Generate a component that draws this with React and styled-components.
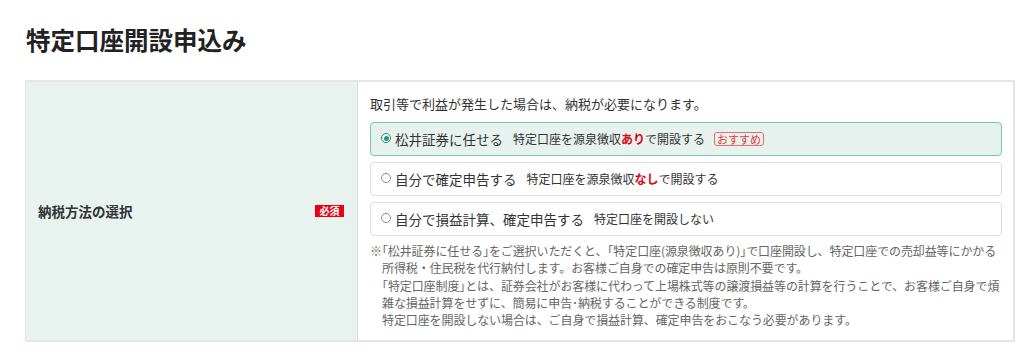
import React from "react";
import styled, { createGlobalStyle } from "styled-components";

const GlobalStyle = createGlobalStyle`
  html, body {
    margin: 0;
    padding: 0;
    background: #ffffff;
  }
  body {
    font-family: "Noto Sans CJK JP", "Noto Sans", sans-serif;
    color: #333333;
  }
`;

const Page = styled.div`
  padding: 26px 10px 0 26px;
`;

const Title = styled.h1`
  margin: 0 0 26px 0;
  font-size: 24.5px;
  line-height: 28px;
  font-weight: 700;
  color: #222222;
`;

const Table = styled.div`
  display: grid;
  grid-template-columns: 332px 1fr;
  width: 990px;
  margin-left: -1px;
  box-sizing: border-box;
  border: 2px solid #e5e5e5;
  border-left-width: 1px;
`;

const HeadCell = styled.div`
  display: flex;
  align-items: center;
  justify-content: space-between;
  padding: 0 13px 0 12px;
  background: #e8f2ef;
  border-right: 1px solid #dcdcdc;
`;

const Label = styled.span`
  font-size: 13.5px;
  font-weight: 700;
  color: #333333;
`;

const Required = styled.span`
  display: inline-block;
  height: 12px;
  line-height: 12px;
  padding: 0 4.5px;
  background: #e60012;
  color: #ffffff;
  font-size: 10px;
  font-weight: 700;
`;

const BodyCell = styled.div`
  padding: 12px 11px 12px 12px;
  display: flex;
  flex-direction: column;
  min-width: 0;
`;

const Intro = styled.p`
  margin: 0 0 8px 0;
  font-size: 13px;
  line-height: 20px;
  color: #333333;
`;

const Options = styled.div`
  display: flex;
  flex-direction: column;
  gap: 6px;
`;

const Option = styled.label`
  display: flex;
  align-items: center;
  box-sizing: border-box;
  height: 34px;
  padding: 0 10px;
  border: 1px solid ${(p) => (p.$selected ? "#79c4ad" : "#dddddd")};
  border-radius: 4px;
  background: ${(p) => (p.$selected ? "#e7f2ee" : "#ffffff")};
  cursor: pointer;
`;

const Radio = styled.span`
  flex: none;
  position: relative;
  box-sizing: border-box;
  width: 10px;
  height: 10px;
  border-radius: 50%;
  border: 1px solid ${(p) => (p.$checked ? "#1d8f72" : "#8a8a8a")};
  background: #ffffff;
  margin-right: 4px;
  margin-top: -2px;

  &::after {
    content: "";
    display: ${(p) => (p.$checked ? "block" : "none")};
    position: absolute;
    left: 1.5px;
    top: 1.5px;
    width: 5px;
    height: 5px;
    border-radius: 50%;
    background: #1d9a79;
  }
`;

const OptionMain = styled.span`
  font-size: 13.5px;
  line-height: 20px;
  color: #333333;
`;

const OptionSub = styled.span`
  margin-left: 10px;
  font-size: 12px;
  line-height: 20px;
  color: #333333;
`;

const Strong = styled.b`
  color: #e60012;
  font-weight: 700;
`;

const Recommend = styled.span`
  display: inline-block;
  margin-left: 9px;
  height: 14px;
  line-height: 12px;
  padding: 0 2px;
  box-sizing: border-box;
  border: 1px solid #ec6b6b;
  border-radius: 3px;
  font-size: 11px;
  color: #e23a3a;
`;

const Notes = styled.div`
  margin-top: 6px;
  padding-left: 12px;
  font-size: 12px;
  line-height: 17.25px;
  letter-spacing: -0.1px;
  color: #666666;
`;

const NoteLine = styled.p`
  margin: 0;
  white-space: nowrap;
  text-indent: ${(p) => (p.$mark ? "-12px" : "0")};
`;

const Yaku = styled.span`
  font-feature-settings: "halt";
`;

const yaku = (s) =>
  s.split(/([「」])/).map((part, i) =>
    /^[「」]$/.test(part) ? <Yaku key={i}>{part}</Yaku> : part
  );

const options = [
  {
    main: "松井証券に任せる",
    sub: ["特定口座を源泉徴収", "あり", "で開設する"],
    selected: true,
    recommend: true,
  },
  {
    main: "自分で確定申告する",
    sub: ["特定口座を源泉徴収", "なし", "で開設する"],
  },
  {
    main: "自分で損益計算、確定申告する",
    sub: ["特定口座を開設しない"],
  },
];

export default function App() {
  return (
    <>
      <GlobalStyle />
      <Page>
        <Title>特定口座開設申込み</Title>
        <Table>
          <HeadCell>
            <Label>納税方法の選択</Label>
            <Required>必須</Required>
          </HeadCell>
          <BodyCell>
            <Intro>取引等で利益が発生した場合は、納税が必要になります。</Intro>
            <Options>
              {options.map((o, i) => (
                <Option key={i} $selected={o.selected}>
                  <Radio $checked={o.selected} />
                  <OptionMain>{o.main}</OptionMain>
                  <OptionSub>
                    {o.sub[0]}
                    {o.sub[1] && <Strong>{o.sub[1]}</Strong>}
                    {o.sub[2]}
                  </OptionSub>
                  {o.recommend && <Recommend>おすすめ</Recommend>}
                </Option>
              ))}
            </Options>
            <Notes>
              <NoteLine $mark>
                ※{yaku("「松井証券に任せる」をご選択いただくと、「特定口座(源泉徴収あり)」で口座開設し、特定口座での売却益等にかかる")}
                <br />
                所得税・住民税を代行納付します。お客様ご自身での確定申告は原則不要です。
              </NoteLine>
              <NoteLine>
                {yaku("「特定口座制度」とは、証券会社がお客様に代わって上場株式等の譲渡損益等の計算を行うことで、お客様ご自身で煩")}
                <br />
                雑な損益計算をせずに、簡易に申告･納税することができる制度です。
              </NoteLine>
              <NoteLine>
                特定口座を開設しない場合は、ご自身で損益計算、確定申告をおこなう必要があります。
              </NoteLine>
            </Notes>
          </BodyCell>
        </Table>
      </Page>
    </>
  );
}
